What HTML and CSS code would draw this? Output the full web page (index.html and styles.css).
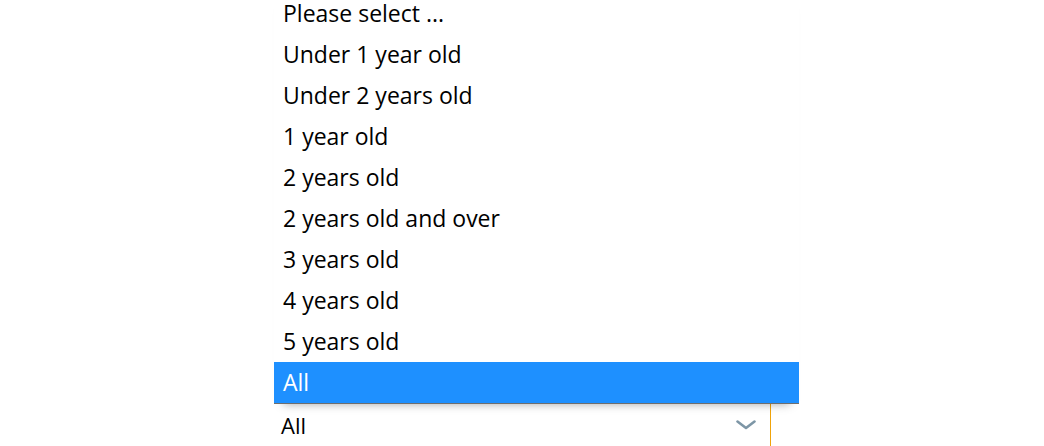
FILE: index.html
```html
<!DOCTYPE html>
<html>
<head>
<meta charset="utf-8">
<link rel="stylesheet" href="styles.css">
</head>
<body>
<div class="wrap">
  <ul class="list">
    <li class="opt">Please select ...</li>
    <li class="opt">Under 1 year old</li>
    <li class="opt">Under 2 years old</li>
    <li class="opt">1 year old</li>
    <li class="opt">2 years old</li>
    <li class="opt">2 years old and over</li>
    <li class="opt">3 years old</li>
    <li class="opt">4 years old</li>
    <li class="opt">5 years old</li>
    <li class="opt sel">All</li>
  </ul>
  <div class="select">
    <span class="value">All</span>
    <svg class="chev" width="20" height="10" viewBox="0 0 20 10"><path d="M1.5 1.5 L10 8 L18.5 1.5" fill="none" stroke="#7d96a6" stroke-width="2.6" stroke-linecap="round" stroke-linejoin="round"/></svg>
  </div>
</div>
</body>
</html>
```
FILE: styles.css
```css
html, body {
  margin: 0;
  padding: 0;
  background: #fff;
  overflow: hidden;
}
body {
  font-family: "Open Sans", "DejaVu Sans", sans-serif;
  color: #000;
}
.wrap {
  margin-left: 274px;
  width: 525px;
  margin-top: -7px;
  display: flex;
  flex-direction: column;
}
.list {
  list-style: none;
  margin: 0;
  padding: 0;
  background: #fff;
  border-bottom: 1px solid #6e6e6e;
  position: relative;
  z-index: 2;
  box-shadow: 0 9px 9px -9px rgba(0, 0, 0, 0.35);
}
.opt {
  height: 41px;
  line-height: 41px;
  padding-left: 9px;
  font-size: 23px;
  white-space: nowrap;
}
.opt.sel {
  background: #1e90ff;
  color: #fff;
}
.select {
  width: 497px;
  height: 46px;
  border-right: 1px solid #f0a30a;
  display: flex;
  align-items: center;
  padding-left: 7px;
  box-sizing: border-box;
  position: relative;
  z-index: 1;
}
.value {
  flex: 1;
  font-size: 22px;
  padding-bottom: 4px;
}
.chev {
  margin-right: 14px;
  margin-bottom: 4px;
}
```
